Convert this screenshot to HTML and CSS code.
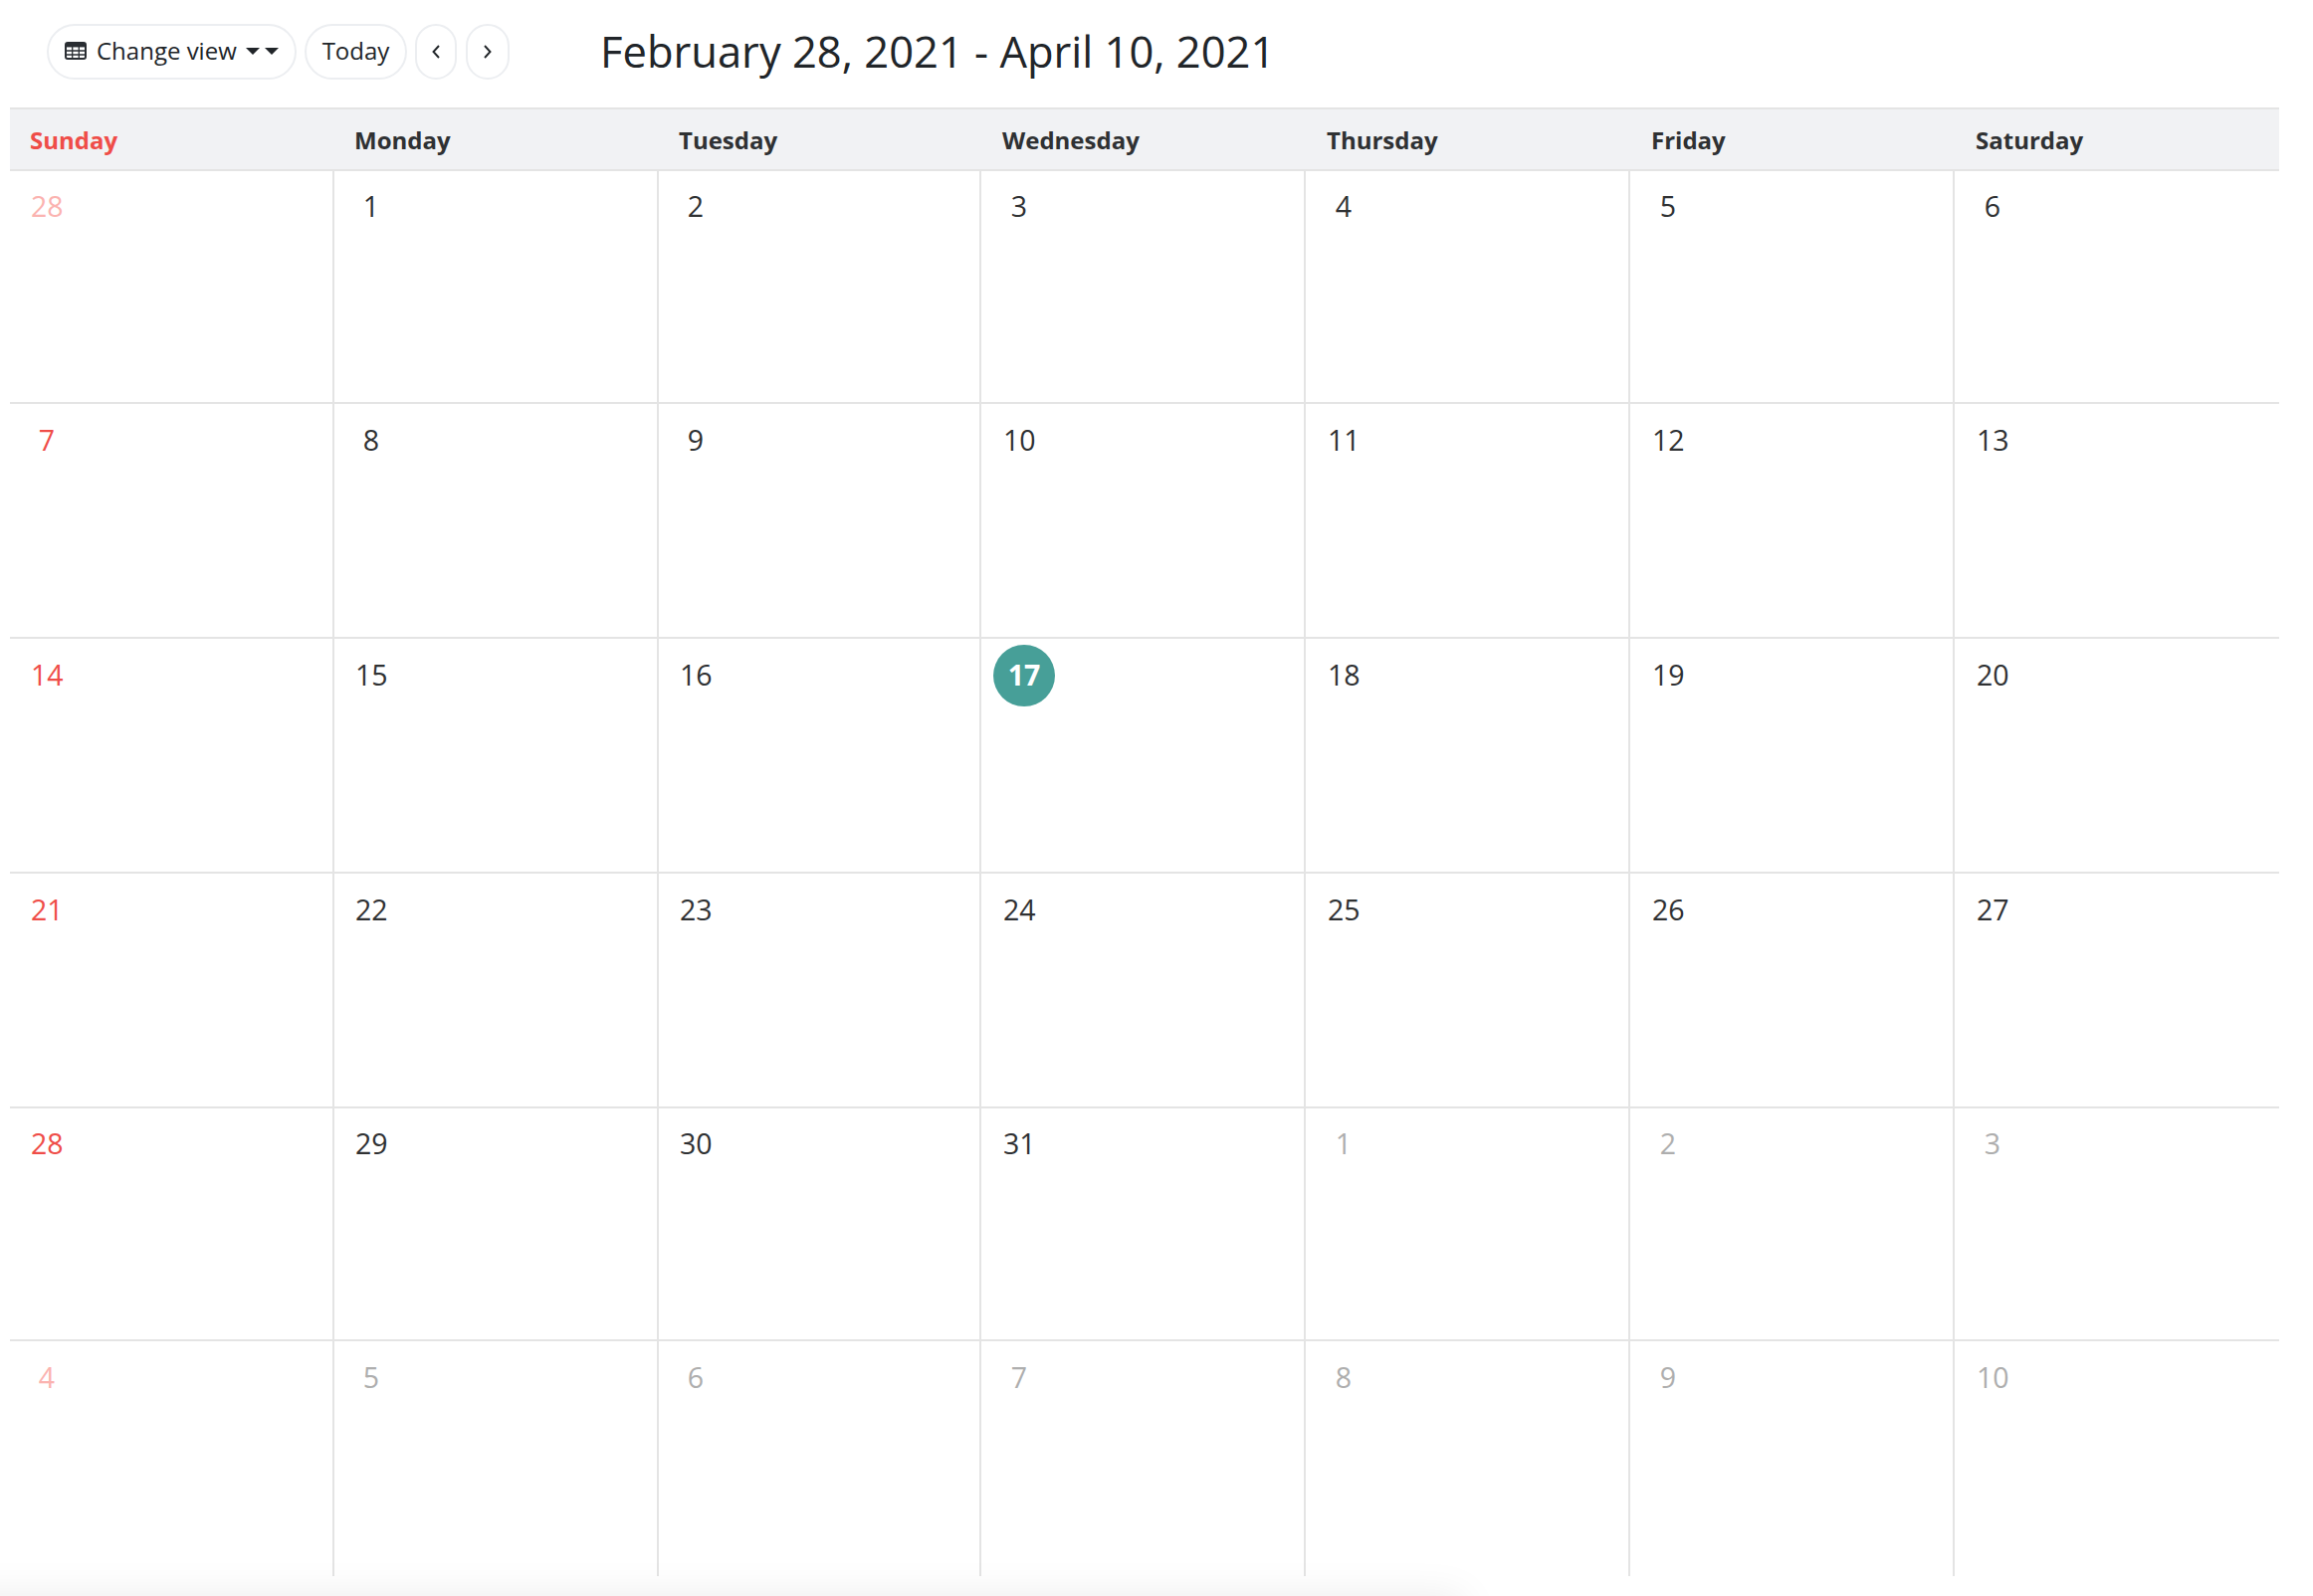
FILE: index.html
```html
<!DOCTYPE html>
<html lang="en">
<head>
<meta charset="utf-8">
<title>Calendar</title>
<link rel="stylesheet" href="styles.css">
</head>
<body>
<div class="page">
  <header class="toolbar">
    <div class="buttons">
      <button class="btn btn-view">
        <svg class="grid-icon" viewBox="0 0 22 18" width="22" height="18" aria-hidden="true">
          <rect x="1" y="1" width="20" height="16" rx="2" fill="none" stroke="#2a2e33" stroke-width="2"/>
          <path d="M1 9h20M1 13h20M7.7 5v12M14.3 5v12" stroke="#2a2e33" stroke-width="1.3" fill="none"/>
          <rect x="1" y="1" width="20" height="4.4" fill="#2a2e33"/>
        </svg>
        <span>Change view</span>
        <span class="caret caret-a"></span><span class="caret caret-b"></span>
      </button>
      <button class="btn btn-today">Today</button>
      <button class="btn btn-prev" aria-label="Previous">
        <svg viewBox="0 0 10 16" width="10" height="16" aria-hidden="true"><path d="M8 2 2.5 8 8 14" fill="none" stroke="#212529" stroke-width="1.9"/></svg>
      </button>
      <button class="btn btn-next" aria-label="Next">
        <svg viewBox="0 0 10 16" width="10" height="16" aria-hidden="true"><path d="M2 2 7.5 8 2 14" fill="none" stroke="#212529" stroke-width="1.9"/></svg>
      </button>
    </div>
    <h1 class="title">February 28, 2021 - April 10, 2021</h1>
  </header>
  <section class="calendar">
    <div class="head">
      <div class="hd sun">Sunday</div><div class="hd">Monday</div><div class="hd">Tuesday</div><div class="hd">Wednesday</div><div class="hd">Thursday</div><div class="hd">Friday</div><div class="hd">Saturday</div>
    </div>
    <div class="week short tight">
      <div class="day sun other"><span class="num">28</span></div><div class="day"><span class="num">1</span></div><div class="day"><span class="num">2</span></div><div class="day"><span class="num">3</span></div><div class="day"><span class="num">4</span></div><div class="day"><span class="num">5</span></div><div class="day"><span class="num">6</span></div>
    </div>
    <div class="week">
      <div class="day sun"><span class="num">7</span></div><div class="day"><span class="num">8</span></div><div class="day"><span class="num">9</span></div><div class="day"><span class="num">10</span></div><div class="day"><span class="num">11</span></div><div class="day"><span class="num">12</span></div><div class="day"><span class="num">13</span></div>
    </div>
    <div class="week">
      <div class="day sun"><span class="num">14</span></div><div class="day"><span class="num">15</span></div><div class="day"><span class="num">16</span></div><div class="day"><span class="num today">17</span></div><div class="day"><span class="num">18</span></div><div class="day"><span class="num">19</span></div><div class="day"><span class="num">20</span></div>
    </div>
    <div class="week">
      <div class="day sun"><span class="num">21</span></div><div class="day"><span class="num">22</span></div><div class="day"><span class="num">23</span></div><div class="day"><span class="num">24</span></div><div class="day"><span class="num">25</span></div><div class="day"><span class="num">26</span></div><div class="day"><span class="num">27</span></div>
    </div>
    <div class="week short tight">
      <div class="day sun"><span class="num">28</span></div><div class="day"><span class="num">29</span></div><div class="day"><span class="num">30</span></div><div class="day"><span class="num">31</span></div><div class="day other"><span class="num">1</span></div><div class="day other"><span class="num">2</span></div><div class="day other"><span class="num">3</span></div>
    </div>
    <div class="week last">
      <div class="day sun other"><span class="num">4</span></div><div class="day other"><span class="num">5</span></div><div class="day other"><span class="num">6</span></div><div class="day other"><span class="num">7</span></div><div class="day other"><span class="num">8</span></div><div class="day other"><span class="num">9</span></div><div class="day other"><span class="num">10</span></div>
    </div>
  </section>
</div>
<div class="edge-clip"><div class="edge-shadow"></div></div>
</body>
</html>
```
FILE: styles.css
```css
* { box-sizing: border-box; }
html, body { margin: 0; padding: 0; background: #fff; }
body { width: 2324px; height: 1604px; overflow: hidden; position: relative; font-family: "Open Sans", "Noto Sans", sans-serif; color: #212529; }
.page { padding: 0 34px 0 10px; }
.toolbar { height: 108px; display: flex; align-items: center; padding: 0 0 4px 37px; }
.buttons { display: flex; gap: 8px; width: 556px; flex: none; }
.btn { height: 56px; border: 2px solid #eceef1; border-radius: 28px; background: #fff; font: 400 24px "Open Sans", sans-serif; color: #212529; display: flex; align-items: center; justify-content: center; padding: 0 0 4px; }
.btn-view { width: 251px; justify-content: flex-start; padding-left: 16px; }
.grid-icon { margin: 2px 10px 0 0; }
.caret { width: 0; height: 0; border-left: 7.5px solid transparent; border-right: 7.5px solid transparent; border-top: 7px solid #212529; margin-top: 2px; }
.caret-a { margin-left: 9px; }
.caret-b { margin-left: 5px; }
.btn-today { width: 103px; }
.btn-prev { width: 42px; padding: 0; }
.btn-next { width: 44px; margin-left: 1px; padding: 0; }
.title { margin: 0; font-weight: 400; font-size: 43.5px; line-height: 1; color: #212529; white-space: nowrap; }
.calendar { width: 2280px; }
.head, .week { display: grid; grid-template-columns: 324px 326px 324px 326px 326px 326px 328px; }
.head { height: 64px; background: #f1f2f4; border-top: 2px solid #e4e4e4; border-bottom: 2px solid #e4e4e4; }
.hd { font-weight: 700; font-size: 24px; color: #2f3133; padding: 13px 0 0 22px; line-height: 35px; }
.hd:first-child { padding-left: 20px; }
.hd:nth-child(n+4) { padding-left: 23px; }
.hd.sun { color: #ef4d48; }
.week { height: 236px; border-bottom: 2px solid #e4e4e4; }
.week.short { height: 234px; }
.week.last { border-bottom: 0; }
.day { border-left: 2px solid #e4e4e4; padding: 16px 0 0 21px; }
.week.tight .day { padding-top: 15px; }
.day:first-child { border-left: 0; }
.day:nth-child(n+4) { padding-left: 22px; }
.num { display: block; width: fit-content; font-size: 28.5px; line-height: 40px; min-width: 32px; text-align: center; color: #2f3133; }
.day.sun .num { color: #ef4d48; }
.day.other .num { color: #aeaeae; }
.day.sun.other .num { color: #fbb3b0; }
.day .num.today { width: 62px; height: 62px; border-radius: 50%; background: #479f98; color: #fff; font-weight: 700; line-height: 60px; margin: -10px 0 0 -10px; }
.edge-clip { position: absolute; left: 0; right: 0; bottom: 0; height: 60px; overflow: hidden; }
.edge-shadow { position: absolute; left: -100px; top: 60px; width: 1570px; height: 120px; box-shadow: 0 0 40px rgba(0,0,0,.08); }
```
